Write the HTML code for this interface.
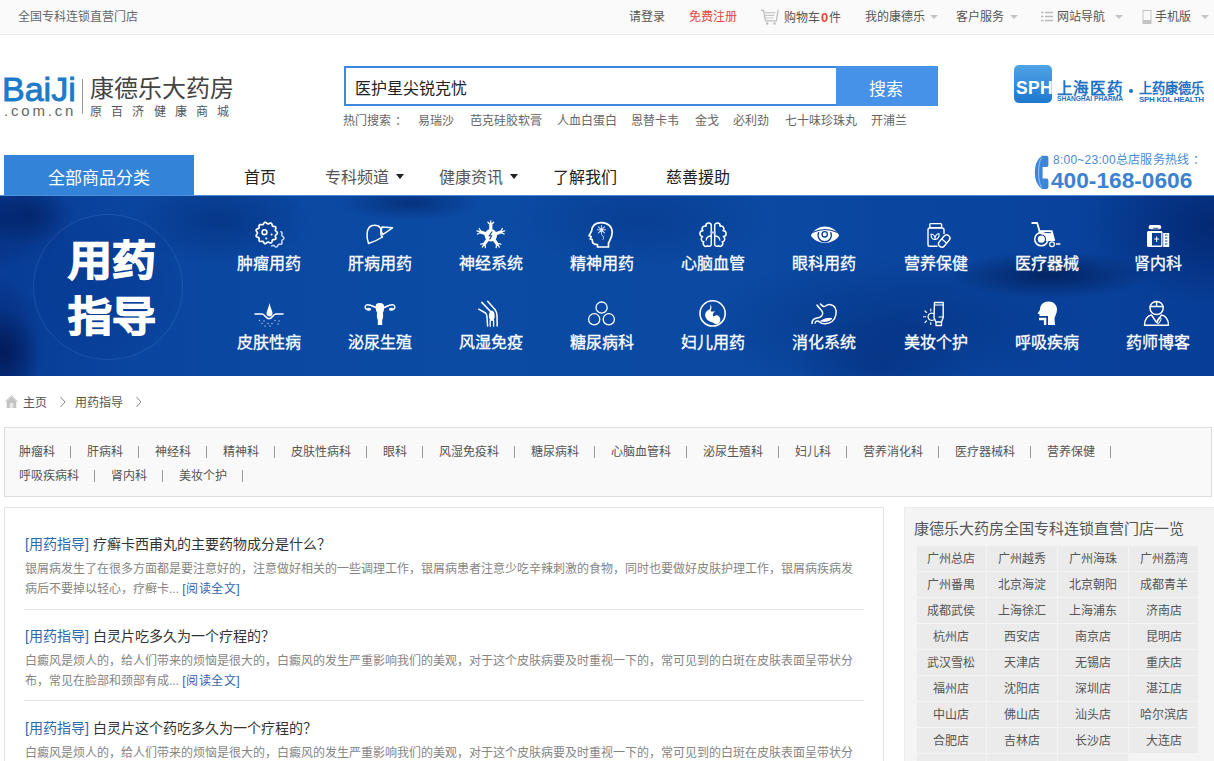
<!DOCTYPE html>
<html lang="zh-CN"><head><meta charset="utf-8">
<style>
*{margin:0;padding:0;box-sizing:border-box}
html,body{width:1214px;height:761px;overflow:hidden;background:#fff}
body{position:relative;font-family:"Liberation Sans",sans-serif;color:#333}
.a{position:absolute;white-space:nowrap}
.t{position:absolute;white-space:nowrap;line-height:1;margin-top:1px}
.bl{font-size:16px;color:#fff;-webkit-text-stroke:0.3px #fff;width:111.13px;text-align:center}
.cat{font-size:12px;line-height:12px;color:#555;white-space:nowrap}
.ci{display:inline-block}
.cs{display:inline-block;width:32px;height:12px;position:relative;color:transparent;vertical-align:top}
.cs:after{content:"";position:absolute;left:15px;top:0;width:1px;height:12px;background:#9a9a9a}
.shop{width:69.5px;height:25px;background:#ebebeb;font-size:12px;line-height:27px;text-align:center;color:#555}
.arr{position:absolute;width:0;height:0;border-left:4px solid transparent;border-right:4px solid transparent;border-top:4px solid #c4c4c4}
</style></head><body>

<!-- TOP BAR -->
<div class="a" style="left:0;top:0;width:1214px;height:35px;background:#fafafa;border-bottom:1px solid #ededed"></div>
<div class="t" style="left:18px;top:10px;font-size:12px;color:#666">全国专科连锁直营门店</div>
<div class="t" style="left:629px;top:10px;font-size:12px;color:#555">请登录</div>
<div class="t" style="left:689px;top:10px;font-size:12px;color:#e4473f">免费注册</div>
<svg class="a" style="left:759.5px;top:6.5px" width="20" height="18.5" viewBox="0 0 22 20">
 <path d="M1 3 L4 4 L6 15 L18 15 L20 3" fill="none" stroke="#bdbdbd" stroke-width="1.4"/>
 <path d="M5 6 H17 M5.5 9 H16 M6 12 H15" stroke="#c8c8c8" stroke-width="1.2"/>
 <circle cx="8" cy="18" r="1.3" fill="#bbb"/><circle cx="16" cy="18" r="1.3" fill="#bbb"/>
</svg>
<div class="t" style="left:784px;top:10px;font-size:12px;color:#555">购物车<b style="color:#e4473f;font-weight:bold;font-size:13px;margin:0 1px">0</b>件</div>
<div class="t" style="left:865px;top:10px;font-size:12px;color:#555">我的康德乐</div>
<div class="arr" style="left:930px;top:15px"></div>
<div class="t" style="left:956px;top:10px;font-size:12px;color:#555">客户服务</div>
<div class="arr" style="left:1010px;top:15px"></div>
<svg class="a" style="left:1041px;top:11px" width="12" height="11" viewBox="0 0 12 11">
 <path d="M0 1.5H2.5M4 1.5H12M0 5.5H2.5M4 5.5H12M0 9.5H2.5M4 9.5H12" stroke="#bbb" stroke-width="1.6"/>
</svg>
<div class="t" style="left:1057px;top:10px;font-size:12px;color:#555">网站导航</div>
<div class="arr" style="left:1115px;top:15px"></div>
<svg class="a" style="left:1142px;top:10px" width="10" height="14" viewBox="0 0 10 14">
 <rect x="1" y="0.5" width="8" height="13" fill="none" stroke="#c4c4c4" stroke-width="1"/>
 <rect x="1" y="10" width="8" height="3.5" fill="#c4c4c4"/>
</svg>
<div class="t" style="left:1155px;top:10px;font-size:12px;color:#555">手机版</div>
<div class="arr" style="left:1201px;top:15px"></div>

<!-- HEADER -->
<div class="t" style="left:2px;top:71px;font-size:34px;color:#1c7bc9;-webkit-text-stroke:0.9px #1c7bc9;letter-spacing:0px">BaiJi</div>
<div class="t" style="left:4px;top:102px;font-size:15px;color:#666;letter-spacing:2.8px">.com.cn</div>
<div class="a" style="left:82px;top:79px;width:1px;height:35px;background:#999"></div>
<div class="t" style="left:90px;top:76px;font-size:24px;color:#444">康德乐大药房</div>
<div class="t" style="left:90px;top:104.5px;font-size:12px;color:#555;letter-spacing:9.2px">原百济健康商城</div>

<div class="a" style="left:344px;top:66px;width:594px;height:40px;border:2px solid #3f87de;background:#fff"></div>
<div class="a" style="left:836px;top:66px;width:102px;height:40px;background:#4592e8"></div>
<div class="t" style="left:355px;top:80px;font-size:16px;color:#222">医护星尖锐克忧</div>
<div class="t" style="left:869px;top:80px;font-size:17px;color:#fff">搜索</div>
<div class="t" id="hot" style="left:343px;top:114px;font-size:12px;color:#666">热门搜索<span style="padding-left:4px">：</span></div>
<div class="t" style="left:418px;top:114px;font-size:12px;color:#666">易瑞沙</div>
<div class="t" style="left:470px;top:114px;font-size:12px;color:#666">芭克硅胶软膏</div>
<div class="t" style="left:557px;top:114px;font-size:12px;color:#666">人血白蛋白</div>
<div class="t" style="left:631px;top:114px;font-size:12px;color:#666">恩替卡韦</div>
<div class="t" style="left:695px;top:114px;font-size:12px;color:#666">金戈</div>
<div class="t" style="left:733px;top:114px;font-size:12px;color:#666">必利劲</div>
<div class="t" style="left:785px;top:114px;font-size:12px;color:#666">七十味珍珠丸</div>
<div class="t" style="left:871px;top:114px;font-size:12px;color:#666">开浦兰</div>

<!-- SPH logo -->
<div class="a" style="left:1014px;top:65px;width:38px;height:38px;border-radius:5px;background:linear-gradient(#4fa3e6,#1f78cf)"></div>
<div class="t" style="left:1016px;top:79.2px;font-size:17.5px;color:#fff;font-weight:bold;letter-spacing:0.3px">SPH</div>
<div class="t" style="left:1056.5px;top:80px;font-size:15.5px;color:#1f73c4;font-weight:bold;letter-spacing:0.9px">上海医药</div>
<div class="t" style="left:1057px;top:94.8px;font-size:6.6px;color:#1f73c4;font-weight:bold">SHANGHAI PHARMA</div>
<div class="a" style="left:1129px;top:89px;width:4px;height:4px;border-radius:2px;background:#1f73c4"></div>
<div class="t" style="left:1138.5px;top:81px;font-size:13.2px;color:#1f73c4;font-weight:bold">上药康德乐</div>
<div class="t" style="left:1139px;top:94.5px;font-size:8px;color:#1f73c4;font-weight:bold;letter-spacing:-0.3px">SPH KDL HEALTH</div>

<!-- NAV -->
<div class="a" style="left:4px;top:155px;width:190px;height:41px;background:#3384d9"></div>
<div class="t" style="left:48px;top:168.5px;font-size:17px;color:#fff">全部商品分类</div>
<div class="t" style="left:244px;top:169px;font-size:16px;color:#222">首页</div>
<div class="t" style="left:325px;top:169px;font-size:16px;color:#555">专科频道</div>
<div class="a" style="left:396px;top:174px;width:0;height:0;border-left:4.5px solid transparent;border-right:4.5px solid transparent;border-top:5px solid #222"></div>
<div class="t" style="left:439px;top:169px;font-size:16px;color:#555">健康资讯</div>
<div class="a" style="left:510px;top:174px;width:0;height:0;border-left:4.5px solid transparent;border-right:4.5px solid transparent;border-top:5px solid #222"></div>
<div class="t" style="left:553px;top:169px;font-size:16px;color:#222">了解我们</div>
<div class="t" style="left:666px;top:169px;font-size:16px;color:#222">慈善援助</div>

<svg class="a" style="left:0;top:0" width="1214" height="200" viewBox="0 0 1214 200">
 <path d="M1042 155.8 L1046.5 155.8 Q1048.4 155.8 1048.4 157.8 L1048.4 165 Q1048.4 167 1046.5 167 L1042.6 167 L1042.6 178.5 L1046.5 178.5 Q1048.4 178.5 1048.4 180.5 L1048.4 187 Q1048.4 189 1046.5 189 L1042 189 Q1034.8 184 1034.8 172.4 Q1034.8 161 1042 155.8 Z" fill="#3b86d6"/>
 <path d="M1041.6 157.5 Q1038.6 162 1038.6 172.4 Q1038.6 183 1041.6 187.5" fill="none" stroke="#fff" stroke-width="0.7" opacity="0.7"/>
</svg>
<div class="t" style="left:1053px;top:153px;font-size:12px;color:#4a8ad4;letter-spacing:0.25px">8:00~23:00总店服务热线<span style="padding-left:4px">：</span></div>
<div class="t" style="left:1051px;top:168px;font-size:22.7px;color:#3b82d0;font-weight:bold">400-168-0606</div>

<!-- BANNER -->
<div id="banner" class="a" style="left:0;top:195px;width:1214px;height:181px;overflow:hidden;
background:
radial-gradient(ellipse 45px 30px at 30px 20px, rgba(0,20,80,0.45), rgba(0,20,80,0) 100%),
radial-gradient(ellipse 35px 45px at 5px 160px, rgba(0,15,70,0.55), rgba(0,15,70,0) 100%),
radial-gradient(ellipse 70px 18px at 410px 8px, rgba(0,20,80,0.45), rgba(0,20,80,0) 100%),
radial-gradient(ellipse 70px 50px at 0px 25px, rgba(0,20,80,0.4), rgba(0,20,80,0) 100%),
radial-gradient(ellipse 45px 70px at 0px 150px, rgba(0,20,80,0.5), rgba(0,20,80,0) 100%),
radial-gradient(ellipse 90px 45px at 220px 25px, rgba(0,25,90,0.35), rgba(0,25,90,0) 100%),
radial-gradient(ellipse 100px 24px at 1050px 80px, rgba(0,15,60,0.6), rgba(0,15,60,0) 100%),
radial-gradient(ellipse 200px 70px at 900px 130px, rgba(0,25,90,0.3), rgba(0,25,90,0) 100%),
radial-gradient(ellipse 130px 80px at 1214px 30px, rgba(0,20,80,0.5), rgba(0,20,80,0) 100%),
radial-gradient(ellipse 130px 50px at 640px 25px, rgba(0,30,100,0.25), rgba(0,30,100,0) 100%),
radial-gradient(ellipse 90px 50px at 880px 170px, rgba(0,30,100,0.3), rgba(0,30,100,0) 100%),
linear-gradient(90deg,#083c96 0px,#0a46a0 150px,#0b4ba4 450px,#0b49a2 750px,#09449e 1000px,#073d96 1214px)">
<div class="a" style="left:0;top:0;width:1214px;height:1px;background:#4d8fd8"></div>
<div class="a" style="left:33px;top:19px;width:150px;height:146px;border-radius:50%;border:1.5px solid rgba(110,160,235,0.18);background:radial-gradient(circle, rgba(0,30,110,0.15), rgba(0,30,110,0.05) 70%, rgba(0,0,0,0) 72%)"></div>
</div>
<div class="t" style="left:68px;top:232px;font-size:44px;line-height:60px;color:#fff;font-weight:700;-webkit-text-stroke:1.4px #fff;height:120px;white-space:normal;width:95px;transform:scaleY(0.93);transform-origin:0 0">用药<br>指导</div>
<div class="t bl" style="left:213.19px;top:255px">肿瘤用药</div>
<div class="t bl" style="left:213.19px;top:334px">皮肤性病</div>
<div class="t bl" style="left:324.31px;top:255px">肝病用药</div>
<div class="t bl" style="left:324.31px;top:334px">泌尿生殖</div>
<div class="t bl" style="left:435.44px;top:255px">神经系统</div>
<div class="t bl" style="left:435.44px;top:334px">风湿免疫</div>
<div class="t bl" style="left:546.58px;top:255px">精神用药</div>
<div class="t bl" style="left:546.58px;top:334px">糖尿病科</div>
<div class="t bl" style="left:657.70px;top:255px">心脑血管</div>
<div class="t bl" style="left:657.70px;top:334px">妇儿用药</div>
<div class="t bl" style="left:768.84px;top:255px">眼科用药</div>
<div class="t bl" style="left:768.84px;top:334px">消化系统</div>
<div class="t bl" style="left:879.96px;top:255px">营养保健</div>
<div class="t bl" style="left:879.96px;top:334px">美妆个护</div>
<div class="t bl" style="left:991.09px;top:255px">医疗器械</div>
<div class="t bl" style="left:991.09px;top:334px">呼吸疾病</div>
<div class="t bl" style="left:1102.22px;top:255px">肾内科</div>
<div class="t bl" style="left:1102.22px;top:334px">药师博客</div>


<!-- BREADCRUMB -->
<svg class="a" style="left:4px;top:394px" width="15" height="15" viewBox="0 0 15 15">
 <path d="M0.8 7.6 L7.5 1.2 L14.2 7.6 L12.3 7.6 L12.3 14 L2.7 14 L2.7 7.6 Z" fill="#c2c2c2"/>
 <path d="M2.2 7.2 L7.5 2.6 L12.8 7.2" fill="none" stroke="#fff" stroke-width="0.8" opacity="0.6"/>
 <rect x="5.6" y="9" width="3.8" height="5" fill="#e6e6e6"/>
</svg>
<div class="t" style="left:23px;top:396px;font-size:12px;color:#555">主页</div>
<svg class="a" style="left:59px;top:396px" width="8" height="12" viewBox="0 0 8 12"><path d="M1.5 1 L6 6 L1.5 11" fill="none" stroke="#888" stroke-width="1"/></svg>
<div class="t" style="left:75px;top:396px;font-size:12px;color:#555">用药指导</div>
<svg class="a" style="left:135px;top:396px" width="8" height="12" viewBox="0 0 8 12"><path d="M1.5 1 L6 6 L1.5 11" fill="none" stroke="#888" stroke-width="1"/></svg>

<!-- CATEGORY BOX -->
<div class="a" style="left:4px;top:427px;width:1208px;height:70px;background:#f9f9f9;border:1px solid #dcdcdc"></div>
<div class="a cat" style="left:18.5px;top:446px;width:1190px"><span class="ci">肿瘤科</span><span class="cs">|</span><span class="ci">肝病科</span><span class="cs">|</span><span class="ci">神经科</span><span class="cs">|</span><span class="ci">精神科</span><span class="cs">|</span><span class="ci">皮肤性病科</span><span class="cs">|</span><span class="ci">眼科</span><span class="cs">|</span><span class="ci">风湿免疫科</span><span class="cs">|</span><span class="ci">糖尿病科</span><span class="cs">|</span><span class="ci">心脑血管科</span><span class="cs">|</span><span class="ci">泌尿生殖科</span><span class="cs">|</span><span class="ci">妇儿科</span><span class="cs">|</span><span class="ci">营养消化科</span><span class="cs">|</span><span class="ci">医疗器械科</span><span class="cs">|</span><span class="ci">营养保健</span><span class="cs">|</span></div>
<div class="a cat" style="left:18.5px;top:470px;width:1190px"><span class="ci">呼吸疾病科</span><span class="cs">|</span><span class="ci">肾内科</span><span class="cs">|</span><span class="ci">美妆个护</span><span class="cs">|</span></div>

<!-- ARTICLES -->
<div class="a" style="left:4px;top:507px;width:880px;height:270px;border:1px solid #e3e3e3;background:#fff"></div>
<div class="t" style="left:25px;top:535.5px;font-size:14px;color:#333"><span style="color:#2d6aab">[用药指导]</span>&nbsp;疗癣卡西甫丸的主要药物成分是什么？</div>
<div class="t" style="left:25px;top:562px;font-size:12px;color:#858585">银屑病发生了在很多方面都是要注意好的，注意做好相关的一些调理工作，银屑病患者注意少吃辛辣刺激的食物，同时也要做好皮肤护理工作，银屑病疾病发</div>
<div class="t" style="left:25px;top:582px;font-size:12px;color:#858585">病后不要掉以轻心，疗癣卡... <span style="color:#2f66b0;letter-spacing:0.5px">[阅读全文]</span></div>
<div class="a" style="left:24px;top:609px;width:840px;height:1px;background:#e3e3e3"></div>
<div class="t" style="left:25px;top:627.5px;font-size:14px;color:#333"><span style="color:#2d6aab">[用药指导]</span>&nbsp;白灵片吃多久为一个疗程的？</div>
<div class="t" style="left:25px;top:654px;font-size:12px;color:#858585">白癜风是烦人的，给人们带来的烦恼是很大的，白癜风的发生严重影响我们的美观，对于这个皮肤病要及时重视一下的，常可见到的白斑在皮肤表面呈带状分</div>
<div class="t" style="left:25px;top:674px;font-size:12px;color:#858585">布，常见在脸部和颈部有成... <span style="color:#2f66b0;letter-spacing:0.5px">[阅读全文]</span></div>
<div class="a" style="left:24px;top:700px;width:840px;height:1px;background:#e3e3e3"></div>
<div class="t" style="left:25px;top:719.5px;font-size:14px;color:#333"><span style="color:#2d6aab">[用药指导]</span>&nbsp;白灵片这个药吃多久为一个疗程的？</div>
<div class="t" style="left:25px;top:746px;font-size:12px;color:#858585">白癜风是烦人的，给人们带来的烦恼是很大的，白癜风的发生严重影响我们的美观，对于这个皮肤病要及时重视一下的，常可见到的白斑在皮肤表面呈带状分</div>
<div class="t" style="left:25px;top:766px;font-size:12px;color:#858585">布，常见在脸部和颈部有成... <span style="color:#2f66b0;letter-spacing:0.5px">[阅读全文]</span></div>
<div class="a" style="left:24px;top:791px;width:840px;height:1px;background:#e3e3e3"></div>


<!-- SIDEBAR -->
<div class="a" style="left:904px;top:507px;width:310px;height:270px;background:#f4f4f4;border-top:1px solid #ececec;border-left:1px solid #ececec"></div>
<div class="t" style="left:914px;top:520px;font-size:15px;color:#555">康德乐大药房全国专科连锁直营门店一览</div>
<div class="a shop" style="left:916.50px;top:546px">广州总店</div>
<div class="a shop" style="left:987.33px;top:546px">广州越秀</div>
<div class="a shop" style="left:1058.16px;top:546px">广州海珠</div>
<div class="a shop" style="left:1128.99px;top:546px">广州荔湾</div>
<div class="a shop" style="left:916.50px;top:572px">广州番禺</div>
<div class="a shop" style="left:987.33px;top:572px">北京海淀</div>
<div class="a shop" style="left:1058.16px;top:572px">北京朝阳</div>
<div class="a shop" style="left:1128.99px;top:572px">成都青羊</div>
<div class="a shop" style="left:916.50px;top:598px">成都武侯</div>
<div class="a shop" style="left:987.33px;top:598px">上海徐汇</div>
<div class="a shop" style="left:1058.16px;top:598px">上海浦东</div>
<div class="a shop" style="left:1128.99px;top:598px">济南店</div>
<div class="a shop" style="left:916.50px;top:624px">杭州店</div>
<div class="a shop" style="left:987.33px;top:624px">西安店</div>
<div class="a shop" style="left:1058.16px;top:624px">南京店</div>
<div class="a shop" style="left:1128.99px;top:624px">昆明店</div>
<div class="a shop" style="left:916.50px;top:650px">武汉雪松</div>
<div class="a shop" style="left:987.33px;top:650px">天津店</div>
<div class="a shop" style="left:1058.16px;top:650px">无锡店</div>
<div class="a shop" style="left:1128.99px;top:650px">重庆店</div>
<div class="a shop" style="left:916.50px;top:676px">福州店</div>
<div class="a shop" style="left:987.33px;top:676px">沈阳店</div>
<div class="a shop" style="left:1058.16px;top:676px">深圳店</div>
<div class="a shop" style="left:1128.99px;top:676px">湛江店</div>
<div class="a shop" style="left:916.50px;top:702px">中山店</div>
<div class="a shop" style="left:987.33px;top:702px">佛山店</div>
<div class="a shop" style="left:1058.16px;top:702px">汕头店</div>
<div class="a shop" style="left:1128.99px;top:702px">哈尔滨店</div>
<div class="a shop" style="left:916.50px;top:728px">合肥店</div>
<div class="a shop" style="left:987.33px;top:728px">吉林店</div>
<div class="a shop" style="left:1058.16px;top:728px">长沙店</div>
<div class="a shop" style="left:1128.99px;top:728px">大连店</div>
<div class="a shop" style="left:916.50px;top:754px"></div>
<div class="a shop" style="left:987.33px;top:754px"></div>
<div class="a shop" style="left:1058.16px;top:754px"></div>


<svg class="a" style="left:0;top:0" width="1214" height="761" viewBox="0 0 1214 761">
<g fill="none" stroke="#fff" stroke-width="1.5" stroke-linecap="round" stroke-linejoin="round">
<!-- tumor -->
<path d="M277.45 233.00 L277.36 233.42 L277.12 233.83 L276.76 234.20 L276.35 234.54 L275.94 234.86 L275.62 235.17 L275.41 235.49 L275.34 235.84 L275.40 236.25 L275.54 236.70 L275.71 237.20 L275.85 237.72 L275.91 238.21 L275.83 238.66 L275.61 239.02 L275.25 239.28 L274.78 239.45 L274.25 239.54 L273.73 239.59 L273.25 239.65 L272.85 239.76 L272.54 239.96 L272.33 240.27 L272.18 240.69 L272.06 241.18 L271.93 241.70 L271.74 242.18 L271.48 242.58 L271.14 242.85 L270.73 242.96 L270.26 242.92 L269.77 242.76 L269.29 242.53 L268.83 242.29 L268.41 242.11 L268.03 242.05 L267.68 242.12 L267.33 242.32 L266.98 242.64 L266.60 243.00 L266.19 243.35 L265.76 243.61 L265.33 243.74 L264.90 243.71 L264.51 243.50 L264.16 243.16 L263.86 242.72 L263.59 242.26 L263.34 241.84 L263.07 241.51 L262.77 241.31 L262.40 241.24 L261.97 241.27 L261.48 241.36 L260.95 241.45 L260.43 241.49 L259.95 241.44 L259.56 241.25 L259.27 240.93 L259.10 240.50 L259.04 239.99 L259.05 239.45 L259.07 238.93 L259.07 238.47 L258.98 238.09 L258.78 237.79 L258.46 237.56 L258.03 237.36 L257.55 237.17 L257.06 236.95 L256.63 236.68 L256.32 236.34 L256.16 235.94 L256.17 235.50 L256.33 235.04 L256.59 234.59 L256.90 234.15 L257.18 233.74 L257.38 233.36 L257.45 233.00 L257.38 232.64 L257.18 232.26 L256.90 231.85 L256.59 231.41 L256.33 230.96 L256.17 230.50 L256.16 230.06 L256.32 229.66 L256.63 229.32 L257.06 229.05 L257.55 228.83 L258.03 228.64 L258.46 228.44 L258.78 228.21 L258.98 227.91 L259.07 227.53 L259.07 227.07 L259.05 226.55 L259.04 226.01 L259.10 225.50 L259.27 225.07 L259.56 224.75 L259.95 224.56 L260.43 224.51 L260.95 224.55 L261.48 224.64 L261.97 224.73 L262.40 224.76 L262.77 224.69 L263.07 224.49 L263.34 224.16 L263.59 223.74 L263.86 223.28 L264.16 222.84 L264.51 222.50 L264.90 222.29 L265.33 222.26 L265.76 222.39 L266.19 222.65 L266.60 223.00 L266.98 223.36 L267.33 223.68 L267.68 223.88 L268.03 223.95 L268.41 223.89 L268.83 223.71 L269.29 223.47 L269.77 223.24 L270.26 223.08 L270.73 223.04 L271.14 223.15 L271.48 223.42 L271.74 223.82 L271.93 224.30 L272.06 224.82 L272.18 225.31 L272.33 225.73 L272.54 226.04 L272.85 226.24 L273.25 226.35 L273.73 226.41 L274.25 226.46 L274.78 226.55 L275.25 226.72 L275.61 226.98 L275.83 227.34 L275.91 227.79 L275.85 228.28 L275.71 228.80 L275.54 229.30 L275.40 229.75 L275.34 230.16 L275.41 230.51 L275.62 230.83 L275.94 231.14 L276.35 231.46 L276.76 231.80 L277.12 232.17 L277.36 232.58 L277.45 233.00Z" stroke-width="1.7"/>
<path d="M280.92 231.70 L281.36 231.84 L281.71 232.08 L281.94 232.43 L282.06 232.86 L282.06 233.34 L281.99 233.83 L281.89 234.32 L281.81 234.76 L281.79 235.15 L281.87 235.49 L282.06 235.79 L282.36 236.07 L282.72 236.36 L283.11 236.67 L283.47 237.02 L283.74 237.40 L283.88 237.81 L283.88 238.23 L283.72 238.63 L283.44 239.01 L283.08 239.36 L282.69 239.67 L282.32 239.95 L282.04 240.24 L281.86 240.54 L281.79 240.89 L281.81 241.28 L281.90 241.73 L282.00 242.21 L282.06 242.71 L282.05 243.19 L281.93 243.61 L281.68 243.94 L281.32 244.18 L280.88 244.31 L280.38 244.36 L279.88 244.35 L279.41 244.33 L278.99 244.35 L278.64 244.45 L278.36 244.64 L278.11 244.94 L277.89 245.32 L277.67 245.75 L277.41 246.18 L277.10 246.56 L276.74 246.83 L276.35 246.97 L275.92 246.95 L275.50 246.80 L275.08 246.53 L274.70 246.21 L274.34 245.89 L274.00 245.61 L273.68 245.43 L273.34 245.37 L272.97 245.42 L272.57 245.56 L272.12 245.74 L271.65 245.91" stroke="#c9dcfb" stroke-width="1.5"/>
<circle cx="264.5" cy="232.2" r="2.4" stroke-width="1.6"/>
<!-- liver -->
<path d="M368.5 243.5 C366 236 366.5 228 371.5 225.8 C376 224.2 380.5 226 381 230 C381 233.5 380 235.5 382.5 237 C378 240 373 242 368.5 243.5Z"/>
<path d="M382 227 L392.5 227.8 L383 234.5 C381.2 232.5 381 229.5 382 227Z"/>
<!-- head -->
<path d="M597.5 247 L597.5 244.5 C595.5 244.5 593 244 592.5 242 L592.2 239.5 L590.2 239 L591.2 236.5 L589 235.8 L591.6 231 C592 225.5 596 222.6 601.5 222.6 C608 222.6 612.2 226.8 612.2 232.5 C612.2 237 610 240 608.5 243 L608.5 247Z" stroke-width="1.7"/>
<path d="M601.5 225.5 L601.5 234 M597.3 229.8 L605.7 229.8 M598.5 226.8 L604.5 232.8 M604.5 226.8 L598.5 232.8" stroke="#c7d9f5" stroke-width="1.1"/><circle cx="601.5" cy="229.8" r="1.6" fill="#dde8fa" stroke="none"/>
<path d="M602 235 C604 236 604 238.5 603 239.5" stroke="#c7d9f5" stroke-width="1"/>
<!-- brain -->
<path d="M711.3 225.2 A2.6 2.6 0 0 0 706 226.2 A2.8 2.8 0 0 0 703 230.8 A2.8 2.8 0 0 0 702.6 236.6 A2.8 2.8 0 0 0 703.8 241.8 A2.8 2.8 0 0 0 707.6 245.8 A2.4 2.4 0 0 0 711.3 245 Z" stroke-width="1.5"/>
<path d="M714.7 225.2 A2.6 2.6 0 0 1 720 226.2 A2.8 2.8 0 0 1 723 230.8 A2.8 2.8 0 0 1 723.4 236.6 A2.8 2.8 0 0 1 722.2 241.8 A2.8 2.8 0 0 1 718.4 245.8 A2.4 2.4 0 0 1 714.7 245 Z" stroke-width="1.5"/>
<path d="M711.3 232.5 L714.7 232.5" stroke="#b8cff2" stroke-width="2.2"/>
<path d="M711.3 236 C708.5 236 706.5 237.5 706.2 240 M714.7 236 C717.5 236 719.5 237.5 719.8 240" stroke-width="1.3"/>
<!-- eye -->
<path d="M810.8 235.5 C817 223.5 833 223.5 839.2 235.5 C833 245.3 817 245.3 810.8 235.5Z" fill="#fff" stroke="none"/>
<path d="M813 232.2 Q825 226.8 837 232.2" stroke="#0a3f93" stroke-width="1.1"/>
<path d="M818.6 232.6 A6.6 6.6 0 1 0 830.8 232.6" stroke="#0a3f93" stroke-width="1.3"/>
<circle cx="824.7" cy="234.3" r="2.7" stroke="#0a3f93" stroke-width="1.3"/>
<!-- jar -->
<rect x="929.8" y="223.6" width="11.8" height="4" rx="0.8" stroke-width="1.4"/>
<path d="M944 233.5 L944 230 Q944 228 942 228 L929.8 228 Q928 228 928 230 L928 244.5 Q928 246.3 929.8 246.3 L937 246.3" stroke-width="1.4"/>
<path d="M931 234 C931 238 933 239.5 935 239.5 C935.5 236.5 934 234.5 931 234Z M935 239.5 C938 239 939.5 236.5 939 233.5 C936 234 935 236.5 935 239.5Z" stroke-width="1.1"/>
<rect x="941" y="234" width="6.5" height="14" rx="3.25" transform="rotate(40 944.2 241)" stroke-width="1.4"/>
<path d="M941.5 241 L946.5 241" transform="rotate(40 944.2 241)" stroke-width="1.2"/>
<!-- wheelchair -->
<path d="M1032.2 223 L1037.2 223 L1039.5 231" stroke-width="1.8"/>
<path d="M1039 230.8 L1052 230.8 L1054.5 240.5 L1046 240.5 Z" fill="#fff" stroke-width="1.2"/>
<path d="M1041 232.6 L1050.5 232.6" stroke="#0a3f93" stroke-width="1"/>
<circle cx="1041.3" cy="239.2" r="6.6" stroke-width="1.6"/>
<circle cx="1041.3" cy="239.2" r="4.2" fill="#fff" stroke="#0a3f93" stroke-width="1.2"/>
<circle cx="1052" cy="244.2" r="2.4" stroke-width="1.2"/>
<path d="M1056.5 244 L1059.8 244" stroke-width="1.6"/>
<!-- bottle -->
<rect x="1148.6" y="225" width="12.6" height="4.2" rx="2" fill="#fff" stroke="none"/>
<rect x="1147" y="231" width="15.5" height="16" rx="1.5" fill="#fff" stroke="none"/>
<rect x="1152" y="233" width="9.2" height="12.5" fill="#0a3f93" stroke="none"/>
<path d="M1154.5 239 L1158.8 239 M1156.6 236.8 L1156.6 241.5" stroke-width="1.1"/>
<rect x="1163.2" y="233" width="6" height="14" fill="#fff" stroke="none"/>
<path d="M1165.4 235 L1167 235 M1165.4 238 L1167 238 M1165.4 241 L1167 241 M1165.4 244 L1167 244" stroke="#0a3f93" stroke-width="1"/>
<path d="M1153.6 228.3 L1158 228.3" stroke="#0a3f93" stroke-width="0.9"/>
<!-- skin -->
<path d="M255 314 L262 314 C265 314 266 318.8 269 318.8 C272 318.8 273 314 276 314 L283 314" stroke-width="1.6"/>
<path d="M269.5 303 C268.5 308 266.5 311 266.5 313.5 C266.5 315.5 268 316.5 269.5 316.5 C271 316.5 272.5 315.5 272.5 313.5 C272.5 311 270.5 308 269.5 303Z" fill="#fff" stroke="none"/>
<g fill="#bcd2f5" stroke="none"><circle cx="259.5" cy="320.5" r="0.7"/><circle cx="264" cy="321" r="0.7"/><circle cx="275" cy="320.5" r="0.7"/><circle cx="279" cy="321" r="0.7"/><circle cx="262" cy="323.5" r="0.7"/><circle cx="268" cy="323.5" r="0.7"/><circle cx="272" cy="323.5" r="0.7"/><circle cx="278" cy="324" r="0.7"/><circle cx="265" cy="326" r="0.7"/><circle cx="270" cy="326" r="0.7"/></g>
<!-- uterus -->
<path d="M376 304.5 C377 302.5 382.5 302.5 383.5 304.5 C385 307 384 311 382.8 313 C383.5 315.5 383.2 318 382.2 320 L382.2 325 L377.8 325 L377.8 320 C376.8 318 376.5 315.5 377.2 313 C376 311 375 307 376 304.5 Z" fill="#fff" stroke="none"/>
<path d="M376.5 307.8 C373.5 306.8 371 304.5 367.5 304.8 C365 305 364.6 307.5 366 309" stroke-width="1.5"/>
<path d="M383.5 307.8 C386.5 306.8 389 304.5 392.5 304.8 C395 305 395.4 307.5 394 309" stroke-width="1.5"/>
<ellipse cx="368.6" cy="309.3" rx="2.5" ry="1.5" fill="#fff" stroke="none"/>
<ellipse cx="391.4" cy="309.3" rx="2.5" ry="1.5" fill="#fff" stroke="none"/>
<!-- knee -->
<path d="M481.8 302.4 L490.5 311.5" stroke-width="1.6"/>
<path d="M487.6 301.3 L495 309.5 C496.5 311.5 497 313.5 497 316 L497.2 326" stroke-width="1.5"/>
<path d="M478.7 309.2 L485.5 313 C486.5 314 487 315.5 487 317 L487.6 326" stroke-width="1.5"/>
<ellipse cx="491.8" cy="315.8" rx="2.9" ry="5.2" fill="#fff" stroke="none"/>
<path d="M490.2 320.5 L490.2 326.2 M493.6 320.5 L493.6 326.2" stroke-width="1.3"/>
<!-- three circles -->
<circle cx="601.6" cy="307.6" r="5.6" stroke-width="1.3"/>
<circle cx="594.2" cy="319.3" r="5.6" stroke-width="1.3"/>
<circle cx="608.8" cy="319.3" r="5.6" stroke-width="1.3"/>
<!-- fetus -->
<circle cx="712.6" cy="313.4" r="12.6" stroke-width="1.6"/>
<path d="M709.5 304 C711 305 710.5 308 709.5 309.5 C706 310.5 704.5 314 705.5 317 C706.5 320 710 322 713 322.5 C715 324.5 718 324.5 719.5 322.5 C721 320 720.5 317 718 315.5 C716.5 315 714.5 316 713.5 316.5 C712 314.5 713.5 312 715.5 311.8 C713 311 711 312 710.5 311 C711.5 309 712.5 306 709.5 304Z" fill="#fff" stroke="none"/>
<!-- stomach -->
<path d="M817 305 C819 308 821.5 310 822.5 312 C823.5 315 821 317.5 817 318 C814 318.5 812 320.5 812 323.5" stroke-width="1.5"/>
<path d="M820.5 304 C822 306 824 307 825.5 306 C828.5 303.5 833 304.5 835 307.5 C837 311 836.5 318 832 321.5 C828 324.5 822 324.5 819.5 322 C818 320.5 816 320.5 815 323" stroke-width="1.5"/>
<path d="M821 321 C825 322 830 321 832 318.5 C829 318 824 318.5 821 321Z" fill="#fff" stroke-width="1"/>
<!-- sun tube -->
<path d="M934.5 302.5 L943.2 302.5 L943.2 317.5 L941.5 322 L935.8 322 L934 317.5 Z" stroke-width="1.4"/>
<path d="M934.8 305 L943 305" stroke-width="1.2"/>
<path d="M939 317 L943 317" stroke-width="1.2"/>
<path d="M936 322 L936 325.5 L941.5 325.5 L941.5 322" stroke-width="1.3"/>
<path d="M933.5 313.5 C931.5 312.5 928 313.5 928 316.8 C928 320 931.5 321 933.5 320" stroke-width="1.2"/>
<path d="M923.5 316.8 L925.8 316.8 M925 311 L926.5 312.5 M925 322.5 L926.5 321 M930.8 309 L930.8 311 M930.8 322.5 L930.8 324.5" stroke-width="1.1"/>
<!-- throat head -->
<path d="M1048 325 L1048 316 L1039.5 316 L1039.5 314.2 L1037.6 313.6 L1040 309.8 C1040 304.5 1044 301.6 1048.5 301.6 C1053.5 301.6 1057 305 1057 309.5 C1057 313.5 1055 316 1054.5 318.5 L1055 325 Z" fill="#fff" stroke="none"/>
<path d="M1039 317.8 L1046.3 317.8 L1046.3 325 L1043.9 325 L1043.9 320.2 L1039 320.2 Z" fill="#fff" stroke="none"/>
<!-- pharmacist -->
<circle cx="1156.6" cy="308" r="6.6" stroke-width="1.5"/>
<path d="M1150 306.5 L1163.2 306.5 M1156.6 301.5 L1156.6 306.5" stroke-width="1.4"/>
<path d="M1144.5 325.3 C1144.5 319 1148 315.5 1151.5 315 L1156.6 322.5 L1161.5 315 C1165 315.5 1168.5 319 1168.5 325.3 Z" stroke-width="1.4"/>
<rect x="1157.5" y="317.5" width="2.8" height="6" rx="1.4" transform="rotate(30 1158.9 320.5)" stroke-width="1"/>
</g>
<circle cx="490.8" cy="235.3" r="6.2" fill="#fff"/>
<path d="M490.80 235.30 L490.80 225.30 M490.80 235.30 L500.31 232.21 M490.80 235.30 L496.68 243.39 M490.80 235.30 L484.92 243.39 M490.80 235.30 L481.29 232.21 " stroke="#fff" stroke-width="3.2" stroke-linecap="round"/>
<path d="M490.80 225.30 L490.80 220.80 M490.80 225.30 L487.94 222.23 M490.80 225.30 L493.66 222.23 M500.31 232.21 L504.59 230.82 M500.31 232.21 L502.35 228.54 M500.31 232.21 L504.12 233.98 M496.68 243.39 L499.32 247.03 M496.68 243.39 L500.80 244.19 M496.68 243.39 L496.17 247.56 M484.92 243.39 L482.28 247.03 M484.92 243.39 L485.43 247.56 M484.92 243.39 L480.80 244.19 M481.29 232.21 L477.01 230.82 M481.29 232.21 L477.48 233.98 M481.29 232.21 L479.25 228.54 " stroke="#fff" stroke-width="1.3" stroke-linecap="round"/>
<path d="M492.2 231.5 L489.3 235.8 L491.6 235.8 L489.6 239.6" fill="none" stroke="#0a3f93" stroke-width="1.1"/>
<circle cx="271.6" cy="234.5" r="1" fill="#fff"/><circle cx="266.3" cy="238.4" r="1" fill="#fff"/>
</svg>

</body></html>
